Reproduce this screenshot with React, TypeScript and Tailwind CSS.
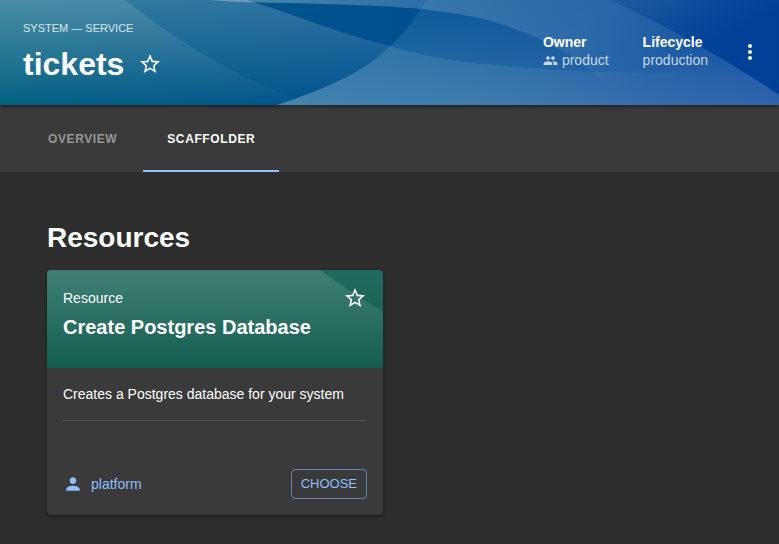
import type { ReactNode } from 'react';
import { MdMoreVert, MdPeople, MdPerson, MdStarBorder } from 'react-icons/md';

function HeaderWaves() {
  return (
    <svg
      className="absolute inset-0 h-full w-full"
      viewBox="0 0 779 105"
      preserveAspectRatio="none"
      aria-hidden="true"
    >
      <defs>
        <linearGradient id="base" gradientUnits="userSpaceOnUse" x1="0" y1="0" x2="779" y2="0">
          <stop offset="0" stopColor="#006080" />
          <stop offset="0.35" stopColor="#00548b" />
          <stop offset="0.55" stopColor="#004f91" />
          <stop offset="1" stopColor="#003f98" />
        </linearGradient>
        <linearGradient id="left" gradientUnits="userSpaceOnUse" x1="60" y1="0" x2="60" y2="105">
          <stop offset="0" stopColor="#fff" stopOpacity="0.12" />
          <stop offset="1" stopColor="#fff" stopOpacity="0.01" />
        </linearGradient>
        <linearGradient id="mid" gradientUnits="userSpaceOnUse" x1="200" y1="0" x2="200" y2="105">
          <stop offset="0" stopColor="#fff" stopOpacity="0.19" />
          <stop offset="1" stopColor="#fff" stopOpacity="0" />
        </linearGradient>
        <linearGradient id="top" gradientUnits="userSpaceOnUse" x1="210" y1="0" x2="328" y2="236">
          <stop offset="0" stopColor="#fff" stopOpacity="0.3" />
          <stop offset="0.4" stopColor="#fff" stopOpacity="0.17" />
          <stop offset="0.72" stopColor="#fff" stopOpacity="0.1" />
          <stop offset="0.95" stopColor="#fff" stopOpacity="0.01" />
          <stop offset="1" stopColor="#fff" stopOpacity="0" />
        </linearGradient>
        <linearGradient id="right" gradientUnits="userSpaceOnUse" x1="600" y1="0" x2="600" y2="105">
          <stop offset="0" stopColor="#a8dcf0" stopOpacity="0.08" />
          <stop offset="1" stopColor="#d8e4f4" stopOpacity="0.22" />
        </linearGradient>
        <linearGradient id="floor" gradientUnits="userSpaceOnUse" x1="280" y1="0" x2="779" y2="0">
          <stop offset="0" stopColor="#c0eef0" stopOpacity="0.14" />
          <stop offset="0.45" stopColor="#c0e4f0" stopOpacity="0.1" />
          <stop offset="0.8" stopColor="#fff" stopOpacity="0.02" />
          <stop offset="1" stopColor="#fff" stopOpacity="0" />
        </linearGradient>
      </defs>
      <rect width="779" height="105" fill="url(#base)" />
      {/* far left sheet */}
      <path d="M0 0H125C165 32 215 64 260 84C280 93 295 99 313 105H0Z" fill="url(#left)" />
      {/* sheet between the left edge and the lens */}
      <path d="M0 0H247C300 16 340 34 390 46C365 72 325 89 277 105H0Z" fill="url(#mid)" />
      {/* sheet above the crest */}
      <path
        d="M210 0C250 4 340 2 420 9C470 14 500 22 520 31C560 46 590 66 611 90L640 105H779V0Z"
        fill="url(#top)"
      />
      {/* large right-hand sheet */}
      <path d="M427 0C415 18 405 33 390 46C365 72 325 89 277 105H779V95C745 71 668 26 610 0Z" fill="url(#right)" />
      {/* lower wave */}
      <path
        d="M390 46C430 58 470 64 520 67C580 73 640 74 700 72L746 73L779 95V105H277C325 89 365 72 390 46Z"
        fill="url(#floor)"
      />
    </svg>
  );
}

function Fact({ label, children }: { label: string; children: ReactNode }) {
  return (
    <div>
      <dt className="font-bold leading-[18px]">{label}</dt>
      <dd className="flex items-center gap-1 text-white/75">{children}</dd>
    </div>
  );
}

function Header() {
  return (
    <header className="relative z-10 flex items-center justify-between bg-[#00558b] px-[23px] pb-[21px] pt-5 shadow-[0_1px_4px_rgba(0,0,0,0.6)]">
      <HeaderWaves />
      <div className="relative">
        <p className="text-[11px] leading-4 text-white/80">SYSTEM — SERVICE</p>
        <div className="mt-2 flex items-center gap-[14px]">
          <h1 className="text-[32px] font-bold leading-10">tickets</h1>
          <button type="button" aria-label="Add to favorites">
            <MdStarBorder size={24} />
          </button>
        </div>
      </div>
      <div className="relative flex items-center gap-[30px]">
        <dl className="flex items-center gap-[34px] pb-[2px] text-sm leading-[18px]">
          <Fact label="Owner">
            <MdPeople size={15} />
            <a href="#product">product</a>
          </Fact>
          <Fact label="Lifecycle">production</Fact>
        </dl>
        <button type="button" aria-label="More actions" className="-mr-[6px]">
          <MdMoreVert size={24} />
        </button>
      </div>
    </header>
  );
}

function Tabs() {
  return (
    <nav className="flex gap-[2px] bg-[#3a3a3a] px-6 text-xs font-bold tracking-wider">
      <a href="#overview" className="border-b-2 border-transparent px-6 pb-[23px] pt-[26px] leading-4 text-[#979797]">
        OVERVIEW
      </a>
      <a
        href="#scaffolder"
        aria-current="page"
        className="border-b-2 border-[#90bfff] px-6 pb-[23px] pt-[26px] leading-4 text-white"
      >
        SCAFFOLDER
      </a>
    </nav>
  );
}

function TemplateCard() {
  return (
    <article className="overflow-hidden rounded bg-[#3a3a3a] shadow-[0_1px_3px_rgba(0,0,0,0.5)]">
      <div className="relative bg-linear-to-b from-[#206b5d] to-[#145d4f] px-4 pb-7 pt-4">
        <svg
          className="absolute inset-0 h-full w-full"
          viewBox="0 0 336 98"
          preserveAspectRatio="none"
          aria-hidden="true"
        >
          <defs>
            <linearGradient id="cardWave" x1="0" y1="0" x2="0" y2="1">
              <stop offset="0" stopColor="#fff" stopOpacity="0.14" />
              <stop offset="1" stopColor="#fff" stopOpacity="0" />
            </linearGradient>
          </defs>
          <path d="M0 0H273C295 16 315 29 336 42V98H0Z" fill="url(#cardWave)" />
        </svg>
        <div className="relative flex items-center justify-between">
          <p className="text-sm leading-6">Resource</p>
          <button type="button" aria-label="Add to favorites">
            <MdStarBorder size={24} />
          </button>
        </div>
        <h3 className="relative mt-1 text-xl font-bold leading-[26px]">Create Postgres Database</h3>
      </div>
      <div className="px-4 pb-4">
        <p className="border-b border-[#565656] pb-4 pt-4 text-sm leading-5">
          Creates a Postgres database for your system
        </p>
        <div className="mt-12 flex items-center justify-between text-[#90bfff]">
          <a href="#platform" className="flex items-center gap-2 text-sm">
            <MdPerson size={20} />
            platform
          </a>
          <button type="button" className="rounded border border-[#6483af] px-[9px] py-1 text-[13px] leading-5">
            CHOOSE
          </button>
        </div>
      </div>
    </article>
  );
}

export default function App() {
  return (
    <div className="min-h-screen bg-[#2d2d2d] font-['Helvetica_Neue','Liberation_Sans',sans-serif] text-white">
      <Header />
      <Tabs />
      <main className="px-[47px] pb-7 pt-12">
        <h2 className="text-[28px] font-bold leading-9">Resources</h2>
        <div className="mt-[14px] grid grid-cols-[repeat(auto-fill,minmax(min(100%,336px),336px))] gap-6">
          <TemplateCard />
        </div>
      </main>
    </div>
  );
}
